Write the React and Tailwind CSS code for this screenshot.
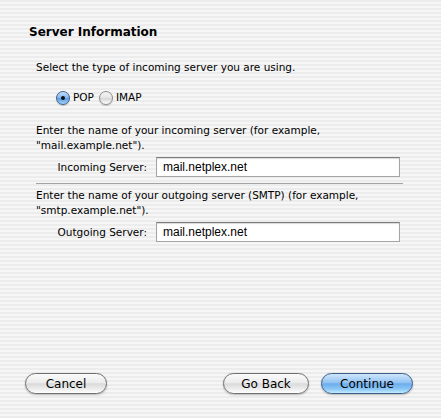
import { useState } from 'react';

const AquaRadio = ({ checked, onClick, label }) => (
  <button type="button" onClick={onClick} className="flex items-center gap-[3px]">
    <span
      className={`flex items-center justify-center w-[14px] h-[14px] rounded-full border shadow-[0_1px_1px_rgba(0,0,0,0.2)] ${
        checked
          ? 'border-[#3f5f8c] bg-[linear-gradient(to_bottom,#c6e0fb_0%,#86b9ee_45%,#5c9fe6_55%,#9fd3fb_100%)]'
          : 'border-[#8c8c8c] bg-[linear-gradient(to_bottom,#f4f4f4_0%,#e4e4e4_50%,#d6d6d6_55%,#ffffff_100%)]'
      }`}
    >
      {checked && <span className="block w-[4px] h-[4px] rounded-full bg-[#111]" />}
    </span>
    <span className="leading-[15px]">{label}</span>
  </button>
);

const ServerField = ({ label, value }) => (
  <div className="flex items-center pl-[36px]">
    <span className="w-[111px] text-right leading-[15px]">{label}</span>
    <div className="ml-[9px] w-[244px] h-[20px] bg-white border border-[#a5a5a5] border-t-[#7c7c7c] shadow-[inset_0_1px_1px_rgba(0,0,0,0.15)] flex items-center pl-[6px]">
      <span className="font-['Liberation_Sans',Arial,sans-serif] text-[12px] leading-[14px]">{value}</span>
    </div>
  </div>
);

const AquaButton = ({ children, primary, className = '' }) => (
  <button
    type="button"
    className={`h-[21px] rounded-full border text-[12px] leading-[14px] shadow-[0_1px_2px_rgba(0,0,0,0.25)] ${
      primary
        ? 'border-[#3d5c88] bg-[linear-gradient(to_bottom,#d0e6fb_0%,#93c3f2_45%,#6dacec_52%,#8cc8f7_80%,#c4ecff_100%)]'
        : 'border-[#6f6f6f] bg-[linear-gradient(to_bottom,#fbfbfb_0%,#ececec_45%,#dadada_52%,#eeeeee_80%,#ffffff_100%)]'
    } ${className}`}
  >
    {children}
  </button>
);

const App = () => {
  const [type, setType] = useState('pop');

  return (
    <div className="w-[441px] h-[418px] flex flex-col font-['DejaVu_Sans',sans-serif] text-[10.5px] text-black bg-[repeating-linear-gradient(to_bottom,#ececec_0px,#ececec_2px,#f6f6f6_2px,#f6f6f6_4px)]">
      <h1 className="pl-[29px] pt-[25px] text-[12px] font-bold leading-[14px]">Server Information</h1>

      <p className="pl-[36px] mt-[21px] leading-[15px]">Select the type of incoming server you are using.</p>

      <div className="flex items-center gap-[5px] pl-[56px] mt-[15px]">
        <AquaRadio label="POP" checked={type === 'pop'} onClick={() => setType('pop')} />
        <AquaRadio label="IMAP" checked={type === 'imap'} onClick={() => setType('imap')} />
      </div>

      <p className="pl-[36px] mt-[18px] leading-[15px]">
        Enter the name of your incoming server (for example,
        <br />
        "mail.example.net").
      </p>

      <div className="mt-[4px]">
        <ServerField label="Incoming Server:" value="mail.netplex.net" />
      </div>

      <div className="ml-[36px] mt-[6px] w-[367px] h-px bg-[#a3a3a3]" />

      <p className="pl-[36px] mt-[4px] leading-[15px]">
        Enter the name of your outgoing server (SMTP) (for example,
        <br />
        "smtp.example.net").
      </p>

      <div className="mt-[4px]">
        <ServerField label="Outgoing Server:" value="mail.netplex.net" />
      </div>

      <div className="mt-auto flex items-center pl-[25px] pr-[28px] pb-[24px]">
        <AquaButton className="w-[82px]">Cancel</AquaButton>
        <AquaButton className="w-[86px] ml-auto">Go Back</AquaButton>
        <AquaButton primary className="w-[92px] ml-[12px]">Continue</AquaButton>
      </div>
    </div>
  );
};

export default App;
